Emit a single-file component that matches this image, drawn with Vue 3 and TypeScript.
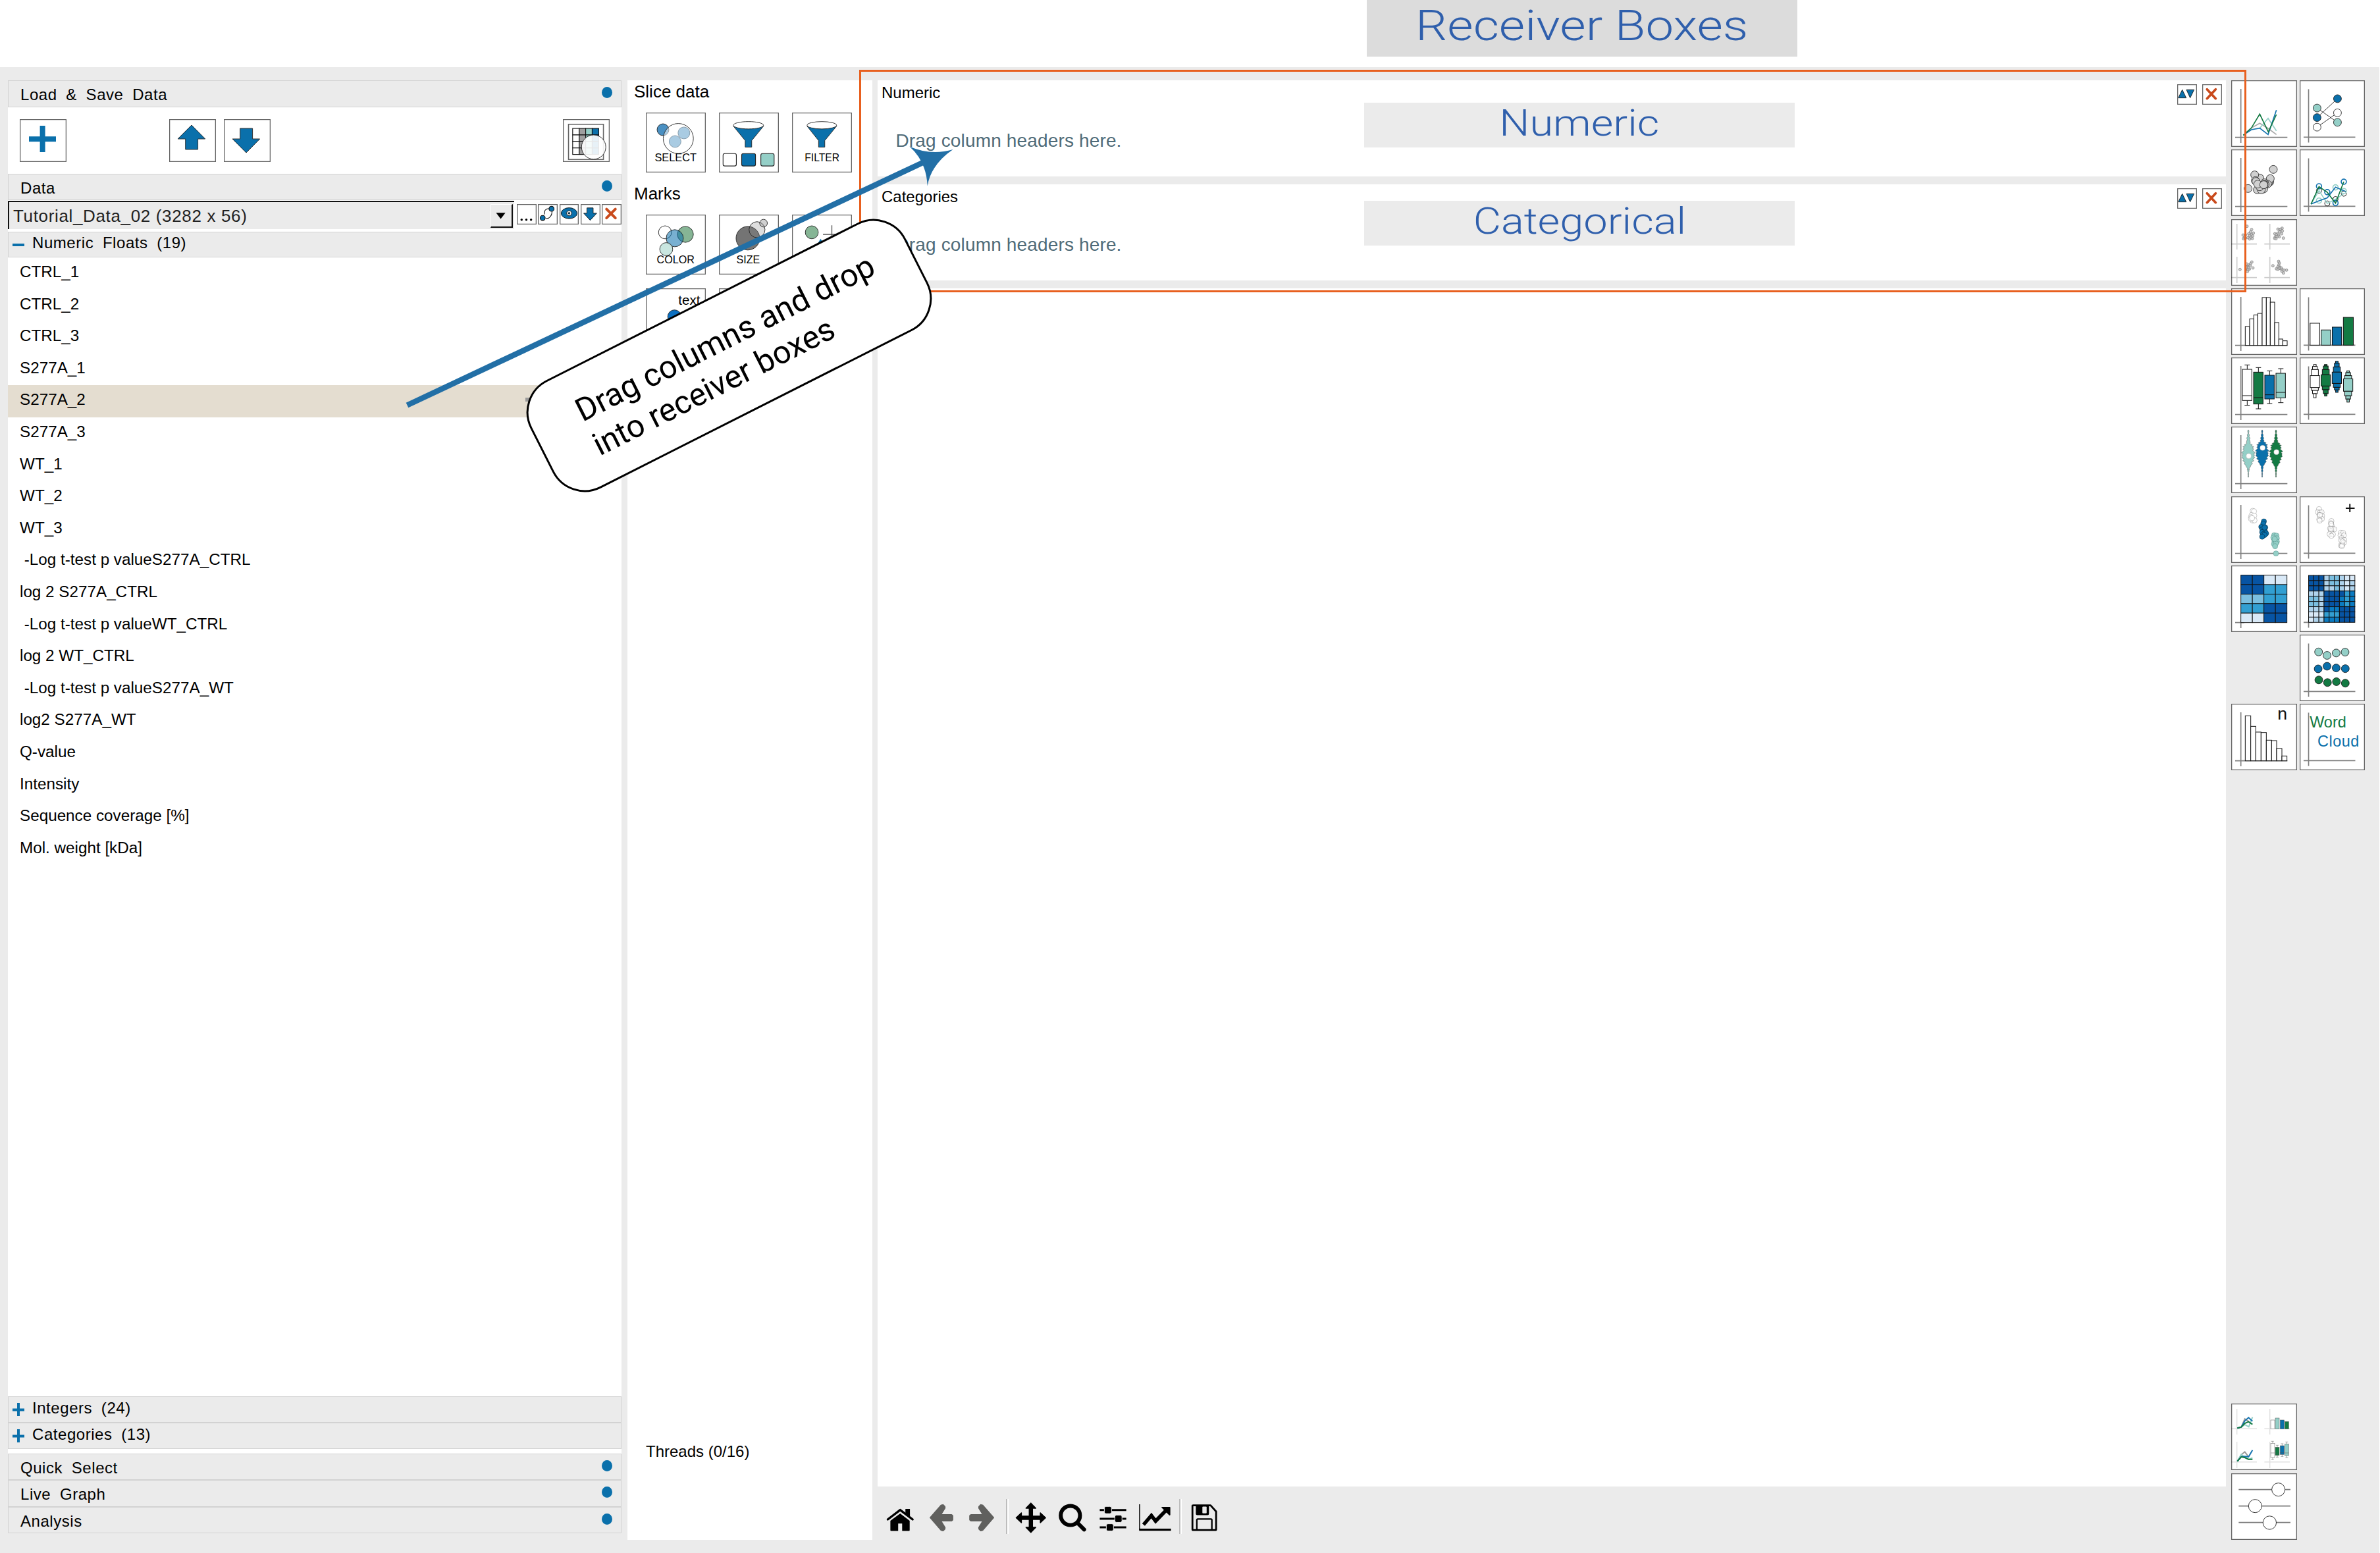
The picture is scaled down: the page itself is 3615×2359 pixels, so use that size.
<script setup lang="ts">
type Pt = [number, number]

const columns: string[] = [
  'CTRL_1', 'CTRL_2', 'CTRL_3', 'S277A_1', 'S277A_2', 'S277A_3', 'WT_1', 'WT_2', 'WT_3',
  ' -Log t-test p valueS277A_CTRL', 'log 2 S277A_CTRL', ' -Log t-test p valueWT_CTRL',
  'log 2 WT_CTRL', ' -Log t-test p valueS277A_WT', 'log2 S277A_WT', 'Q-value',
  'Intensity', 'Sequence coverage [%]', 'Mol. weight [kDa]',
]
const selected = 'S277A_2'

const groups = ['Integers (24)', 'Categories (13)']
const sections = ['Quick Select', 'Live Graph', 'Analysis']
const receivers = ['Numeric', 'Categories']

const GREEN = '#137a43'
const BLUE = '#0a70ab'
const TEAL = '#94cfc7'

// Plot buttons, left to right and top to bottom; an empty name leaves a gap.
const plots = [
  'line', 'slope', 'scatter', 'pointline', 'multiscatter', '', 'hist', 'bar',
  'box', 'boxen', 'violin', '', 'swarm', 'swarmplus', 'heat', 'corr',
  '', 'dots', 'count', 'cloud',
]
const plain = ['multiscatter', 'heat', 'corr']

const scatter: Pt[] = [
  [192, 91], [130, 130], [107, 116], [176, 148], [170, 151], [178, 133], [165, 158], [110, 142],
  [113, 146], [152, 152], [155, 160], [77, 178], [119, 184], [148, 180], [137, 184], [130, 170],
  [150, 160], [121, 158], [148, 161],
]
const mini: Pt[] = [
  [72, 32], [93, 47], [88, 58], [101, 63], [80, 66], [92, 70], [54, 72], [65, 71], [84, 75], [98, 76],
  [59, 84], [76, 84], [90, 83], [56, 89], [84, 90], [96, 88], [64, 88],
  [232, 41], [213, 45], [222, 47], [233, 53], [220, 58], [212, 64], [230, 66], [199, 66], [206, 70],
  [216, 73], [201, 80], [209, 79], [219, 80], [198, 87], [204, 89], [238, 86], [224, 46],
  [40, 229], [94, 195], [88, 203], [71, 204], [80, 209], [75, 216], [86, 213], [99, 222], [73, 224],
  [83, 227], [76, 231], [74, 238], [68, 218], [79, 220],
  [190, 212], [216, 192], [219, 200], [217, 209], [213, 217], [222, 219], [206, 226], [213, 228],
  [224, 225], [232, 229], [231, 237], [241, 232], [252, 232], [238, 245], [219, 223], [228, 222],
]
const histEdges = [64, 84, 103, 121, 141, 160, 178, 198, 217, 235, 255]
const histTops = [174, 139, 121, 114, 42, 42, 63, 156, 231, 239]
const countEdges = [64, 89, 112, 136, 160, 184, 207, 231, 254]
const countTops = [55, 103, 129, 131, 166, 168, 204, 238]
const bars = [
  { x: 48, w: 44, y: 159, c: '#fff' }, { x: 99, w: 43, y: 190, c: TEAL },
  { x: 150, w: 43, y: 177, c: BLUE }, { x: 201, w: 46, y: 132, c: GREEN },
]
const boxes = [
  { x: 51, t: 54, b: 196, m: 174, lo: 34, hi: 218, c: '#fff' },
  { x: 102, t: 67, b: 212, m: 183, lo: 46, hi: 234, c: GREEN },
  { x: 153, t: 81, b: 189, m: 170, lo: 61, hi: 210, c: BLUE },
  { x: 204, t: 72, b: 184, m: 159, lo: 51, hi: 206, c: TEAL },
]
const boxenWidths = [12, 22, 32, 43, 32, 22, 11]
const boxens = [
  { x: 70, c: '#fff', y: [31, 40, 54, 82, 137, 150, 165, 184] },
  { x: 120, c: GREEN, y: [31, 38, 54, 78, 130, 147, 165, 176] },
  { x: 171, c: BLUE, y: [16, 25, 42, 66, 118, 136, 148, 159] },
  { x: 223, c: TEAL, y: [60, 68, 82, 97, 154, 175, 190, 204] },
]
const profile: Pt[] = [
  [16, 2], [24, 3], [30, 1], [38, 5], [46, 3], [52, 8], [58, 5], [66, 9], [71, 7], [77, 18], [81, 14],
  [86, 25], [91, 18], [97, 25], [102, 19], [108, 26], [114, 31], [118, 23], [123, 28], [130, 26],
  [136, 29], [143, 20], [150, 25], [156, 15], [163, 19], [170, 12], [178, 9], [184, 4], [190, 5],
  [196, 2], [202, 4], [208, 1], [216, 2], [222, 1], [230, 2],
]
function violin(cx: number, dy: number): string {
  const at = (y: number) => y + (y > 60 && y < 195 ? dy : 0)
  const r = profile.map(([y, w]) => `${cx + w},${at(y)}`)
  const l = profile.map(([y, w]) => `${cx - w},${at(y)}`).reverse()
  return [...r, ...l].join(' ')
}
const violins = [
  { c: TEAL, p: violin(78, 6), x: 80, y: 134 },
  { c: BLUE, p: violin(141, -3), x: 143, y: 97 },
  { c: GREEN, p: violin(204, 0), x: 206, y: 116 },
]
const swarm: { c: string; s: string; o: number; p: Pt[] }[] = [
  { c: '#fff', s: '#000', o: 0.3, p: [[98, 66], [104, 68], [93, 85], [105, 88], [90, 95], [98, 110], [106, 109], [90, 102], [95, 99]] },
  { c: BLUE, s: '#000', o: 0.5, p: [[149, 114], [146, 124], [137, 139], [155, 142], [142, 150], [150, 155], [141, 163], [155, 163], [159, 169], [146, 173], [152, 176], [141, 184], [152, 142]] },
  { c: TEAL, s: '#417c75', o: 0.6, p: [[196, 177], [206, 179], [192, 188], [208, 191], [197, 203], [208, 206], [195, 217], [204, 214], [200, 227], [198, 195], [204, 260]] },
]
const swarmPlus: Pt[] = [
  [89, 57], [84, 71], [93, 73], [101, 72], [91, 84], [103, 88], [102, 102], [90, 105], [92, 110], [94, 84],
  [146, 112], [144, 122], [147, 134], [140, 146], [152, 147], [159, 150], [144, 158], [138, 172], [153, 173], [146, 180], [144, 148], [145, 126],
  [190, 166], [200, 167], [188, 178], [203, 178], [193, 191], [205, 199], [191, 201], [203, 212], [190, 224], [196, 222], [194, 227], [197, 206],
]
const dots: { c: string; p: Pt[] }[] = [
  { c: TEAL, p: [[87, 78], [126, 94], [168, 83], [209, 79]] },
  { c: BLUE, p: [[85, 156], [126, 144], [168, 152], [210, 155]] },
  { c: GREEN, p: [[88, 207], [128, 219], [169, 215], [210, 222]] },
]
const shades: Record<string, string> = {
  D: '#0754a3', B: '#0b7bc1', C: '#329fd2', M: '#7bbfe0', L: '#afd3ec', W: '#d9e9f7',
}
function cells(rows: string[], x0: number, x1: number) {
  const w = (x1 - x0) / rows[0].length
  const h = 216 / rows.length
  return rows.flatMap((row, j) =>
    [...row].map((k, i) => ({ x: x0 + i * w, y: 44 + j * h, w, h, c: shades[k] })))
}
const grids: Record<string, ReturnType<typeof cells>> = {
  heat: cells(['DDWW', 'DDCC', 'MMCC', 'CCDD', 'WWDD'], 44, 254),
  corr: cells(['DDDLMMLWW', 'DDDLMMLWL', 'DDDLLMLWL', 'LLLDDDDCB', 'MMLDDDBCB', 'MMLDDDBCB', 'LLLDBBDDD', 'WWWCCCDDD', 'WLLBBBDDD'], 41, 254),
}
const gridFill = ['#fff', '#9f9f9f', TEAL, BLUE]
const axisX = (i: number) => (i % 2 ? 41 : 44)
</script>

<template>
  <div class="page">
    <div class="app">
      <!-- data column -->
      <section class="left">
        <header class="bar">Load &amp; Save Data<i class="dot" /></header>
        <div class="actions">
          <button class="big">
            <svg viewBox="0 0 71 65"><path d="M34.6 10v40M14 30.3h41" :stroke="BLUE" stroke-width="8" /></svg>
          </button>
          <button class="big up">
            <svg viewBox="0 0 71 65"><path d="M34 9L54.7 30H43.6V46H24.7V30H13z" :fill="BLUE" stroke="#333" /></svg>
          </button>
          <button class="big down">
            <svg viewBox="0 0 71 65"><path d="M34 51L13 30H24.7V14H43.6V30H54.7z" :fill="BLUE" stroke="#333" /></svg>
          </button>
          <button class="big table">
            <svg viewBox="0 0 158 144">
              <rect x="19" y="17" width="118" height="119" fill="#fff" stroke="#666" stroke-width="3.5" />
              <g stroke="#111" stroke-width="2.5">
                <template v-for="r in 4" :key="r">
                  <rect v-for="c in 4" :key="c" :x="11 + c * 22" :y="9 + r * 22" width="22" height="22" :fill="gridFill[c - 1]" />
                </template>
              </g>
              <circle cx="104" cy="94" r="41" fill="#fff" fill-opacity=".9" stroke="#222" stroke-width="2" />
            </svg>
          </button>
        </div>
        <header class="bar data">Data<i class="dot" /></header>
        <div class="picker">
          <div class="combo"><span>Tutorial_Data_02 (3282 x 56)</span><b class="drop"><svg viewBox="0 0 33 36"><path d="M8 13h15l-7.500 10z" /></svg></b></div>
          <div class="tools">
            <button class="tiny"><svg viewBox="0 0 66 68"><g><circle cx="16" cy="53" r="3.800" /><circle cx="32" cy="53" r="3.800" /><circle cx="48" cy="53" r="3.800" /></g></svg></button>
            <button class="tiny"><svg viewBox="0 0 66 68"><g stroke="#111" stroke-width="2.500" fill="none"><path d="M37 15Q20 16 21 35M48 24Q47 48 27 50" /><circle cx="46" cy="16" r="8.500" :fill="BLUE" /><circle cx="16" cy="47" r="8.500" :fill="BLUE" /></g></svg></button>
            <button class="tiny"><svg viewBox="0 0 66 68"><g stroke="#111" stroke-width="2"><ellipse cx="32" cy="31" rx="27" ry="18.500" :fill="BLUE" /><circle cx="32" cy="31" r="8.500" fill="#fff" /><circle cx="32" cy="31" r="3" :fill="BLUE" /></g></svg></button>
            <button class="tiny"><svg viewBox="0 0 66 68"><path d="M21 13H42V31H54L32 55L10 31H21z" :fill="BLUE" stroke="#111" stroke-width="2" /></svg></button>
            <button class="tiny"><svg viewBox="0 0 66 68"><path d="M16 17L46 47M46 17L16 47" stroke="#c94a1c" stroke-width="9" stroke-linecap="round" /></svg></button>
          </div>
        </div>
        <header class="bar group"><svg class="sign" viewBox="0 0 18 20"><path d="M0 10h18" :stroke="BLUE" stroke-width="4" /></svg>Numeric Floats (19)</header>
        <ul class="list">
          <li v-for="c in columns" :key="c" :class="{ on: c === selected }">{{ c }}<i v-if="c === selected" class="grip" /></li>
        </ul>
        <header v-for="g in groups" :key="g" class="bar group low"><svg class="sign" viewBox="0 0 18 20"><path d="M0 10.500h18M9 0v20" :stroke="BLUE" stroke-width="4" /></svg>{{ g }}</header>
        <div class="sections">
          <header v-for="s in sections" :key="s" class="bar sec">{{ s }}<i class="dot" /></header>
        </div>
      </section>

      <!-- slicing and marks -->
      <section class="mid">
        <h2>Slice data</h2>
        <div class="marks">
          <button class="mark"><svg viewBox="0 0 203 203">
            <g stroke="#222" stroke-width="2">
              <circle cx="58" cy="58" r="20" fill="#4a90c2" /><circle cx="110" cy="88" r="51" fill="#fff" fill-opacity=".55" />
              <circle cx="129" cy="69" r="20" fill="#a9cbe2" stroke="#7d94a3" /><circle cx="99" cy="98" r="20" fill="#a9cbe2" stroke="#7d94a3" />
            </g>
            <text x="101" y="164" font-size="36.500" text-anchor="middle">SELECT</text>
          </svg></button>
          <button class="mark"><svg viewBox="0 0 203 203">
            <path d="M49 46L89 95V117H111V95L151 46z" :fill="BLUE" stroke="#222" stroke-width="2" />
            <ellipse cx="100" cy="43" rx="51" ry="12.500" fill="#fff" stroke="#222" stroke-width="2" />
            <g stroke="#222" stroke-width="2.500"><rect x="14" y="139" width="45" height="42" rx="6" fill="#fff" /><rect x="77" y="139" width="47" height="42" rx="6" :fill="BLUE" /><rect x="142" y="139" width="45" height="42" rx="6" :fill="TEAL" /></g>
          </svg></button>
          <button class="mark"><svg viewBox="0 0 203 203">
            <path d="M51 46L90 95V117H111V95L151 46z" :fill="BLUE" stroke="#222" stroke-width="2" />
            <ellipse cx="101" cy="43" rx="50" ry="12.500" fill="#fff" stroke="#222" stroke-width="2" />
            <text x="102" y="164" font-size="35" text-anchor="middle">FILTER</text>
          </svg></button>
        </div>
        <h2 class="second">Marks</h2>
        <div class="marks">
          <button class="mark"><svg viewBox="0 0 203 203">
            <g stroke="#222" stroke-width="2">
              <circle cx="65" cy="60" r="22" fill="#fff" /><circle cx="134" cy="67" r="27" fill="#86b595" />
              <circle cx="98" cy="80" r="29" fill="#0a70ab" fill-opacity=".55" /><circle cx="69" cy="117" r="22" fill="#c3e3dd" fill-opacity=".9" />
            </g>
            <text x="101" y="164" font-size="36" text-anchor="middle">COLOR</text>
          </svg></button>
          <button class="mark"><svg viewBox="0 0 203 203">
            <g stroke="#222" stroke-width="2">
              <circle cx="98" cy="80" r="40" fill="#747474" /><circle cx="129" cy="51" r="27" fill="#888" fill-opacity=".28" /><circle cx="151" cy="29" r="13" fill="#999" fill-opacity=".45" />
            </g>
            <text x="99" y="164" font-size="36" text-anchor="middle">SIZE</text>
          </svg></button>
          <button class="mark"><svg viewBox="0 0 203 203">
            <circle cx="67" cy="60" r="22" fill="#86b595" stroke="#222" stroke-width="2" />
            <path d="M135 36V96M105 67H165" stroke="#555" stroke-width="3" /><path d="M97 82L120 118H74z" :fill="BLUE" />
          </svg></button>
          <button class="mark"><svg viewBox="0 0 203 203">
            <circle cx="97" cy="96" r="23" fill="#0b6fc0" stroke="#222" stroke-width="2" />
            <text x="110" y="56" font-size="46">text</text>
          </svg></button>
          <button class="mark" />
        </div>
        <p class="threads">Threads (0/16)</p>
      </section>

      <!-- receiver boxes and canvas -->
      <section class="center">
        <div v-for="r in receivers" :key="r" class="receiver">
          <div class="rhead"><span>{{ r }}</span>
            <button class="rbtn"><svg viewBox="0 0 90 91"><g :fill="BLUE" stroke="#111" stroke-width="2.500"><path d="M5 61H41L23 24z" /><path d="M42 24H77L59 61z" /></g></svg></button>
            <button class="rbtn"><svg viewBox="0 0 90 91"><path d="M22 22L61 64M61 22L22 64" stroke="#c94a1c" stroke-width="11" stroke-linecap="round" /></svg></button>
          </div>
          <p class="hint">Drag column headers here.</p>
        </div>
        <div class="canvas" />
        <nav class="nav">
          <svg viewBox="0 0 63 54"><path d="M12.500 31L31.500 16.500L50.500 31" fill="none" stroke="#000" stroke-width="3.400" stroke-linecap="round" stroke-linejoin="round" /><path d="M39.500 15H46.400V28L39.500 22z" /><path d="M31.500 22L46 33V47.500Q46 48.700 45 48.700H34.500V37.300H28.400V48.700H17.500Q16.500 48.700 16.500 47.500V33z" /></svg>
          <svg viewBox="0 0 63 54"><path d="M15.500 28.300L32 9.500L34.500 9L37 11.500L37.200 13.500L30.500 24.300H47.500L49 25.500V31.500L47.500 32.700H30.500L37.200 43.500L37 45.500L34.500 48L32 47.200z" fill="#60605e" stroke="#60605e" stroke-width="2.500" stroke-linejoin="round" /></svg>
          <svg viewBox="0 0 63 54"><path transform="translate(63.500 0) scale(-1 1)" d="M15.500 28.300L32 9.500L34.500 9L37 11.500L37.200 13.500L30.500 24.300H49.500L51 25.500V31.500L49.500 32.700H30.500L37.200 43.500L37 45.500L34.500 48L32 47.200z" fill="#60605e" stroke="#60605e" stroke-width="2.500" stroke-linejoin="round" /></svg>
          <i class="sep" />
          <svg viewBox="0 0 63 54"><path d="M31 9V48M12 28.500H50" stroke="#000" stroke-width="6.500" /><path d="M31 6L38.500 14H23.500zM31 51L38.500 43H23.500zM8.500 28.500L16.500 21V36zM53.500 28.500L45.500 21V36z" stroke="#000" stroke-width="1.500" stroke-linejoin="round" /></svg>
          <svg viewBox="0 0 63 54"><circle cx="28" cy="25" r="14.700" fill="none" stroke="#000" stroke-width="6" /><path d="M39.500 37L49 46.500" stroke="#000" stroke-width="6" stroke-linecap="round" /></svg>
          <svg viewBox="0 0 63 54"><path d="M10.500 16.700H51M10.500 30H51M10.500 43.200H51" stroke="#000" stroke-width="3" /><g stroke="#ebebeb" stroke-width="1"><rect x="17.500" y="11.200" width="11" height="11" rx="2.500" /><rect x="33.500" y="24.500" width="11" height="11" rx="2.500" /><rect x="20.500" y="37.700" width="11" height="11" rx="2.500" /></g></svg>
          <svg viewBox="0 0 63 54"><path d="M8 8V47" stroke="#000" stroke-width="1.500" /><path d="M7.300 46.800H56" stroke="#000" stroke-width="3.200" /><path d="M14 39L26 25L32.500 33.500L50 15.500" fill="none" stroke="#000" stroke-width="5.500" /><path d="M41 12.500Q41.500 11.800 43 11.800H54Q55 11.800 55 13V24Q54.500 25.500 53 24.500z" /></svg>
          <i class="sep" />
          <svg viewBox="0 0 63 54"><g fill="none" stroke="#000" stroke-width="2.800" stroke-linejoin="round"><path d="M13.300 10.500Q13.300 9.500 14.500 9.500H41L49.500 19V46Q49.500 47.200 48.300 47.200H14.500Q13.300 47.200 13.300 46z" /><path d="M20 47V32Q20 30.500 21.500 30.500H41.500Q43 30.500 43 32V47" stroke-width="2.300" /></g><path d="M18.500 9H38.500V22.500Q38.500 24.500 36.500 24.500H20.500Q18.500 24.500 18.500 22.500z" /><rect x="28.500" y="11.500" width="6.500" height="10.300" rx="1" fill="#ebebeb" /></svg>
        </nav>
      </section>

      <!-- plot type buttons -->
      <aside class="side">
        <div class="plots">
          <template v-for="(p, i) in plots" :key="i">
            <span v-if="!p" />
            <button v-else class="plot">
              <svg viewBox="0 0 300 303">
                <path v-if="!plain.includes(p)" :d="`M${axisX(i)} 39V285M18 260H256`" stroke="#000" stroke-opacity=".5" stroke-width="5" />
                <g v-if="p === 'line'" fill="none" stroke-width="5">
                  <polyline points="55,250 92,217 130,196 168,219 206,247" stroke="#a8a8a8" />
                  <polyline points="130,218 168,173 206,230" :stroke="TEAL" />
                  <polyline points="55,250 92,225 130,218 168,247 206,136" stroke="#1473b0" />
                  <polyline points="55,250 92,217 130,154 169,235 206,156" :stroke="GREEN" />
                </g>
                <g v-else-if="p === 'slope'" stroke="#111" stroke-width="2.500">
                  <path d="M80 170L174 83M80 126L174 192M80 214L174 148" />
                  <circle cx="80" cy="126" r="18" :fill="TEAL" /><circle cx="80" cy="170" r="18" :fill="BLUE" /><circle cx="80" cy="214" r="18" fill="#fff" />
                  <circle cx="174" cy="83" r="18" :fill="BLUE" /><circle cx="174" cy="148" r="18" fill="#fff" /><circle cx="174" cy="192" r="18" :fill="TEAL" />
                </g>
                <g v-else-if="p === 'scatter'" fill="#d0d0d0" stroke="#222" stroke-width="2.500">
                  <circle v-for="(q, k) in scatter" :key="k" :cx="q[0]" :cy="q[1]" r="18" />
                </g>
                <g v-else-if="p === 'pointline'" fill="none" stroke-width="5">
                  <g stroke="#222" stroke-width="3"><circle cx="89" cy="188" r="12" /><circle cx="127" cy="247" r="12" /><circle cx="165" cy="227" r="12" /><circle cx="203" cy="202" r="12" /></g>
                  <g :stroke="TEAL"><polyline points="52,250 89,188 127,247 165,228 203,202" /><circle cx="89" cy="234" r="12" /><circle cx="165" cy="173" r="12" /><circle cx="203" cy="190" r="12" /></g>
                  <polyline points="52,250 89,235 127,221 165,172 211,192" stroke="#1473b0" />
                  <g stroke="#1473b0"><circle cx="89" cy="168" r="12" /><circle cx="127" cy="195" r="12" /><circle cx="165" cy="245" r="12" /><circle cx="203" cy="147" r="12" /></g>
                  <polyline points="52,250 89,170 127,196 165,246 203,147" :stroke="GREEN" />
                </g>
                <g v-else-if="p === 'multiscatter'">
                  <path d="M26 21V138M0 113H117M176 21V138M151 113H267M26 171V291M0 266H117M176 171V291M151 266H267" stroke="#000" stroke-opacity=".2" stroke-width="5" />
                  <g fill="#c4c4c4" fill-opacity=".85" stroke="#777" stroke-width="2"><circle v-for="(q, k) in mini" :key="k" :cx="q[0]" :cy="q[1]" r="6" /></g>
                </g>
                <g v-else-if="p === 'hist'" fill="#fff" stroke="#111" stroke-width="3">
                  <rect v-for="(t, k) in histTops" :key="k" :x="histEdges[k]" :y="t" :width="histEdges[k + 1] - histEdges[k]" :height="260 - t" />
                </g>
                <g v-else-if="p === 'count'" fill="#fff" stroke="#111" stroke-width="3">
                  <rect v-for="(t, k) in countTops" :key="k" :x="countEdges[k]" :y="t" :width="countEdges[k + 1] - countEdges[k]" :height="260 - t" />
                  <text x="211" y="71" font-size="80" stroke="none" fill="#111">n</text>
                </g>
                <g v-else-if="p === 'bar'" stroke="#111" stroke-width="3">
                  <rect v-for="b in bars" :key="b.x" :x="b.x" :y="b.y" :width="b.w" :height="260 - b.y" :fill="b.c" />
                </g>
                <g v-else-if="p === 'box'" stroke="#111" stroke-width="3">
                  <g v-for="b in boxes" :key="b.x">
                    <path :d="`M${b.x + 22} ${b.lo}V${b.hi}M${b.x + 10} ${b.lo}H${b.x + 34}M${b.x + 10} ${b.hi}H${b.x + 34}`" />
                    <rect :x="b.x" :y="b.t" width="43" :height="b.b - b.t" :fill="b.c" />
                    <path :d="`M${b.x} ${b.m}h43`" />
                  </g>
                </g>
                <g v-else-if="p === 'boxen'" stroke="#111" stroke-width="3">
                  <g v-for="b in boxens" :key="b.x" :fill="b.c">
                    <rect v-for="(w, k) in boxenWidths" :key="k" :x="b.x - w / 2" :y="b.y[k]" :width="w" :height="b.y[k + 1] - b.y[k]" />
                  </g>
                </g>
                <g v-else-if="p === 'violin'">
                  <g v-for="v in violins" :key="v.c"><polygon :points="v.p" :fill="v.c" stroke="#555" stroke-width="1.500" /><circle :cx="v.x" :cy="v.y" r="12" fill="#fff" stroke="#888" stroke-width="1" /></g>
                </g>
                <g v-else-if="p === 'swarm'">
                  <g v-for="s in swarm" :key="s.c" :fill="s.c" :stroke="s.s" :stroke-opacity="s.o" stroke-width="2"><circle v-for="(q, k) in s.p" :key="k" :cx="q[0]" :cy="q[1]" r="12" /></g>
                </g>
                <g v-else-if="p === 'swarmplus'">
                  <g fill="#fff" fill-opacity=".6" stroke="#000" stroke-opacity=".35" stroke-width="2"><circle v-for="(q, k) in swarmPlus" :key="k" :cx="q[0]" :cy="q[1]" r="12" /></g>
                  <path d="M212 53H253M231 33V71" stroke="#111" stroke-width="6" />
                </g>
                <g v-else-if="p === 'heat' || p === 'corr'">
                  <path :d="`M${axisX(i)} 250V285M18 260H60`" stroke="#000" stroke-opacity=".5" stroke-width="5" />
                  <g stroke="#111" stroke-width="3"><rect v-for="(c, k) in grids[p]" :key="k" :x="c.x" :y="c.y" :width="c.w" :height="c.h" :fill="c.c" /></g>
                </g>
                <g v-else-if="p === 'dots'" stroke="#111" stroke-width="2.500">
                  <g v-for="d in dots" :key="d.c" :fill="d.c"><circle v-for="(q, k) in d.p" :key="k" :cx="q[0]" :cy="q[1]" r="18" /></g>
                </g>
                <g v-else-if="p === 'cloud'" font-size="71">
                  <text x="46" y="108" :fill="GREEN">Word</text><text x="82" y="194" :fill="BLUE" letter-spacing="1.500">Cloud</text>
                </g>
              </svg>
            </button>
          </template>
        </div>
        <div class="plots foot">
          <button class="plot"><svg viewBox="0 0 300 303">
            <path d="M26 24V141M0 115H117M176 24V141M151 115H267M26 174V294M0 266H117M176 174V294M151 266H267" stroke="#000" stroke-opacity=".12" stroke-width="4.500" />
            <g fill="none" stroke-width="6">
              <polyline points="28,112 46,107 62,70 80,82" stroke="#999" /><polyline points="46,107 62,96 80,106 97,62" :stroke="TEAL" />
              <polyline points="28,112 46,107 62,79 79,64 97,80" stroke="#1473b0" /><polyline points="28,112 46,107 62,90 79,83 97,95" :stroke="GREEN" />
              <polyline points="28,263 46,233 62,220 80,244" stroke="#999" /><polyline points="28,263 46,232 62,245 80,255 97,247" :stroke="TEAL" />
              <polyline points="28,263 46,242 62,241 79,243 97,212" stroke="#1473b0" /><polyline points="28,263 46,243 62,246 79,254 97,254" :stroke="GREEN" />
            </g>
            <g stroke="#555" stroke-width="1.500">
              <rect x="180" y="75" width="18" height="41" fill="#fff" /><rect x="201" y="66" width="18" height="50" :fill="TEAL" /><rect x="223" y="75" width="18" height="41" :fill="BLUE" /><rect x="245" y="82" width="17" height="34" :fill="GREEN" />
              <path d="M189 172V255M182 172h12M182 255h12M210 190V244M204 190h12M204 244h12M232 183V241M226 183h12M226 241h12M253 175V246M247 175h12M247 246h12" />
              <rect x="180" y="181" width="18" height="65" fill="#fff" /><rect x="201" y="199" width="18" height="37" :fill="GREEN" /><rect x="223" y="192" width="18" height="40" :fill="BLUE" /><rect x="245" y="184" width="17" height="53" :fill="TEAL" />
              <path d="M180 225h18M201 230h18M223 224h18M245 225h17" />
            </g>
          </svg></button>
          <span />
          <button class="plot"><svg viewBox="0 0 300 303">
            <path d="M34 74H270M34 149H270M34 224H270" stroke="#7a7a7a" stroke-width="5" />
            <g fill="#fff" stroke="#111" stroke-width="2.500"><circle cx="215" cy="74" r="30" /><circle cx="109" cy="149" r="30" /><circle cx="175" cy="225" r="30.500" /></g>
          </svg></button>
        </div>
      </aside>
    </div>

    <!-- annotations laid over the window -->
    <div class="frame" />
    <div class="label title"><span>Receiver Boxes</span></div>
    <div class="label num"><span>Numeric</span></div>
    <div class="label cat"><span>Categorical</span></div>
    <svg class="arrow" viewBox="600 200 860 430">
      <path d="M618.500 615.500L1408 244" stroke="#226fa6" stroke-width="8.500" />
      <path d="M1381.400 222.500Q1414 237 1447.500 227Q1414 250 1408.700 282.500Q1407 245 1381.400 222.500z" fill="#226fa6" />
    </svg>
    <div class="bubble">Drag columns and drop<br />into receiver boxes</div>
  </div>
</template>

<style>
body { margin: 0; background: #fff; }
</style>

<style scoped>
.page { position: relative; box-sizing: border-box; width: 3615px; height: 2359px; padding: 102px 1px 0 0; overflow: hidden; background: #fff; color: #000; font: 24px "Liberation Sans", Arial, sans-serif; }
.app { display: flex; box-sizing: border-box; height: 2257px; padding: 20px 0 0 12px; background: #ebebeb; }
button { display: block; margin: 0; padding: 0; border: 0; background: #fff; box-shadow: inset 0 0 0 1.300px #666; font: inherit; }
svg { display: block; }
button svg { width: 100%; height: 100%; }
svg text { font-family: "Liberation Sans", Arial, sans-serif; }

.left { display: flex; flex-direction: column; width: 932px; height: 2207px; background: #fff; }
.bar { position: relative; flex: none; box-sizing: border-box; height: 40.500px; padding-left: 18px; border: 1px solid #d2d2d2; background: #ebebeb; line-height: 41.500px; letter-spacing: .55px; word-spacing: 6.500px; white-space: nowrap; }
.bar.data { height: 40px; }
.dot { position: absolute; right: 13px; top: 9px; width: 16px; height: 17px; border-radius: 50%; background: #0a70ab; }
.actions { display: flex; flex: none; box-sizing: border-box; height: 101.500px; padding: 18.500px 18px 0; }
.big { width: 71px; height: 65px; }
.up { margin-left: 156px; }
.down { margin-left: 12px; }
.table { margin-left: auto; }
.picker { display: flex; flex: none; height: 47.500px; }
.combo { display: flex; box-sizing: border-box; width: 769px; height: 43px; margin-top: .5px; border-top: 2px solid #111; border-left: 2px solid #111; background: #ebebeb; color: #222; justify-content: space-between; font-size: 26px; letter-spacing: .65px; line-height: 42px; padding-left: 6px; }
.drop { box-sizing: border-box; width: 34px; height: 36px; margin: 3px 2px 0 0; border-right: 2px solid #111; border-bottom: 2px solid #111; border-top: 1px solid #fff; border-left: 1px solid #fff; }
.tools { display: flex; gap: 2.500px; margin: 6px 0 0 4px; }
.tiny { width: 29.800px; height: 30.500px; }
.bar.group { display: flex; align-items: flex-start; height: 39.500px; padding-left: 6px; line-height: 32.500px; }
.sign { width: 18px; height: 20px; margin: 9px 12px 0 0; }
.bar.low { height: 40.400px; line-height: 33.500px; }
.list { flex: 1; margin: 0; padding: 0; list-style: none; font-size: 24.250px; }
.list li { position: relative; box-sizing: border-box; height: 48.600px; padding-left: 18px; line-height: 44.500px; white-space: pre; }
.list li.on { background: #e4ddd0; }
.grip { position: absolute; left: 786px; top: 19px; width: 8px; height: 6px; background: #999; }
.sections { padding-top: 6.500px; }
.bar.sec { height: 40.400px; }

.mid { position: relative; display: flex; flex-direction: column; width: 372px; height: 2217px; margin-left: 9px; background: #fff; }
h2 { margin: 0; padding-left: 10px; height: 49px; font-size: 26px; font-weight: 400; line-height: 35px; }
h2.second { height: 64px; box-sizing: border-box; padding-top: 15px; }
.marks { display: grid; grid-template-columns: repeat(3, 91px); gap: 21px 20px; padding-left: 28px; }
.mark { width: 91px; height: 91px; }
.threads { margin: auto 0 0 28px; padding-bottom: 112px; line-height: 44px; }

.center { display: flex; flex-direction: column; width: 2048px; margin-left: 8px; }
.receiver { flex: none; height: 146px; margin-bottom: 12px; background: #fff; }
.rhead { display: flex; height: 60px; padding: 0 6px 0 6px; }
.rhead span { flex: 1; line-height: 38px; }
.rbtn { width: 30px; height: 31px; margin: 6px 0 0 8px; }
.hint { margin: 0; padding-left: 27.500px; color: #4f6b78; font-size: 28px; letter-spacing: .15px; line-height: 63px; }
.canvas { flex: none; height: 1820px; background: #fff; }
.nav { display: flex; padding: 19px 0 0 2.500px; }
.nav svg { width: 62.600px; height: 54px; }
.sep { box-sizing: border-box; width: 4px; height: 53px; margin: 0 3px 0 5px; border-left: 2px solid #bdbdbd; border-right: 2px solid #fff; }

.side { display: flex; flex-direction: column; justify-content: space-between; height: 2217px; margin-left: 8px; }
.plots { display: grid; grid-template-columns: 100px 99px; grid-auto-rows: 101px; gap: 4.250px 4px; }
.foot { gap: 5px 4px; }
.plot { width: 100%; height: 101px; }

.frame { position: absolute; left: 1304.500px; top: 106px; width: 2101px; height: 332px; border: 3px solid #e8601f; }
.label { position: absolute; left: 2072px; width: 654px; height: 68px; background: #ebebeb; color: #2f5fac; font: 300 56px/62px Roboto, sans-serif; text-align: center; white-space: nowrap; }
.label span { display: inline-block; transform: scaleX(1.160); }
.title { left: 2076px; top: 0; height: 86px; background: #dcdcdc; font-size: 64px; line-height: 80px; }
.title span { transform: scaleX(1.188); }
.num { top: 156px; }
.cat { top: 305px; }
.arrow { position: absolute; left: 600px; top: 200px; width: 860px; height: 430px; }
.bubble { position: absolute; left: 788.300px; top: 448.400px; box-sizing: border-box; width: 639px; height: 184px; padding: 34px 0 0 72px; border: 3px solid #000; border-radius: 55px; background: #fff; font: 48.500px/58px Roboto, sans-serif; white-space: nowrap; transform: rotate(-26.800deg); }
</style>
